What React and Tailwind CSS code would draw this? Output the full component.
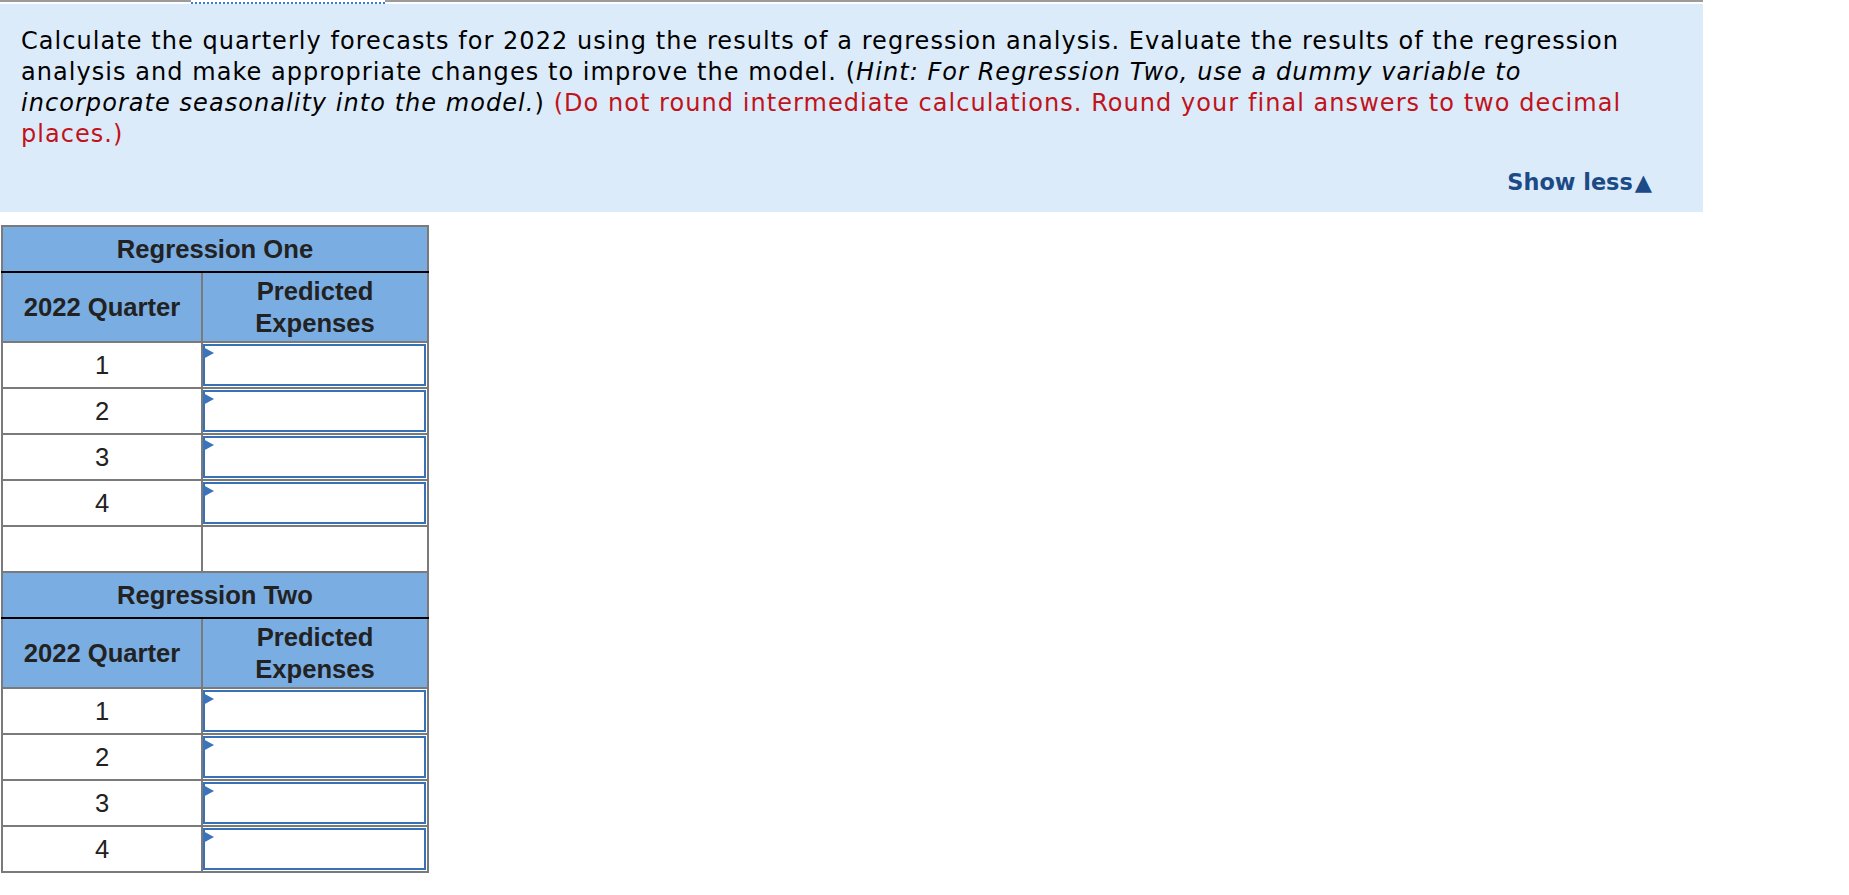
import React from 'react';

const rows = [1, 2, 3, 4];

const AnswerInput = () => (
    <div className="relative h-[44px] pt-px pr-px pb-px">
        <input type="text" className="block w-full h-full border-2 border-[#3871b6] bg-white outline-none" />
        <span className="absolute left-0 top-[4px] w-0 h-0 border-y-[6px] border-y-transparent border-l-[11px] border-l-[#3a74bc]" />
    </div>
);

const RegressionBlock = ({ title }) => (
    <>
        <tr className="h-[46px]">
            <th colSpan={2} className="border-2 border-[#7a7a7a] border-b-black bg-[#7aade2] font-bold text-[#222]">
                {title}
            </th>
        </tr>
        <tr className="h-[70px]">
            <th className="w-[200px] border-2 border-[#7a7a7a] border-t-black bg-[#7aade2] font-bold text-[#222]">
                2022 Quarter
            </th>
            <th className="border-2 border-[#7a7a7a] border-t-black bg-[#7aade2] font-bold text-[#222] px-6">
                Predicted Expenses
            </th>
        </tr>
        {rows.map((q) => (
            <tr key={q} className="h-[46px]">
                <td className="border-2 border-[#7a7a7a] text-center text-[#222]">{q}</td>
                <td className="border-2 border-[#7a7a7a] p-0">
                    <AnswerInput />
                </td>
            </tr>
        ))}
    </>
);

export default function App() {
    return (
        <div className="min-h-screen bg-white">
            {/* Question panel */}
            <div className="w-[1703px]">
                <div className="flex h-[4px]">
                    <div className="w-[191px] border-t-2 border-[#9c9c9c]" />
                    <div className="w-[194px] border-b-2 border-dotted border-[#3a7cd0]" />
                    <div className="flex-1 border-t-2 border-[#9c9c9c]" />
                </div>
                <div className="bg-[#dcebf9] pl-[21px] pr-[45px] pt-[22px] pb-[14px] font-['DejaVu_Sans',Verdana,sans-serif] text-[22.4px] leading-[31px] text-black">
                    <p className="text-[24px] tracking-[1.05px]">
                        Calculate the quarterly forecasts for 2022 using the results of a regression analysis. Evaluate the results of the regression analysis and make appropriate changes to improve the model. (<i>Hint: For Regression Two, use a dummy variable to incorporate seasonality into the model.</i>){' '}
                        <span className="text-[#c0131b]">
                            (Do not round intermediate calculations. Round your final answers to two decimal places.)
                        </span>
                    </p>
                    <div className="mt-[17px] flex justify-end pr-[6px]">
                        <button className="font-bold text-[#1b4a86]">
                            Show less<span className="ml-[2px]">▲</span>
                        </button>
                    </div>
                </div>
            </div>

            {/* Answer table */}
            <table className="mt-[13px] ml-px w-[428px] border-collapse font-['Liberation_Sans',Arial,sans-serif] text-[25.6px] leading-[32px]">
                <tbody>
                    <RegressionBlock title="Regression One" />
                    <tr className="h-[46px]">
                        <td className="border-2 border-[#7a7a7a]" />
                        <td className="border-2 border-[#7a7a7a]" />
                    </tr>
                    <RegressionBlock title="Regression Two" />
                </tbody>
            </table>
        </div>
    );
}
